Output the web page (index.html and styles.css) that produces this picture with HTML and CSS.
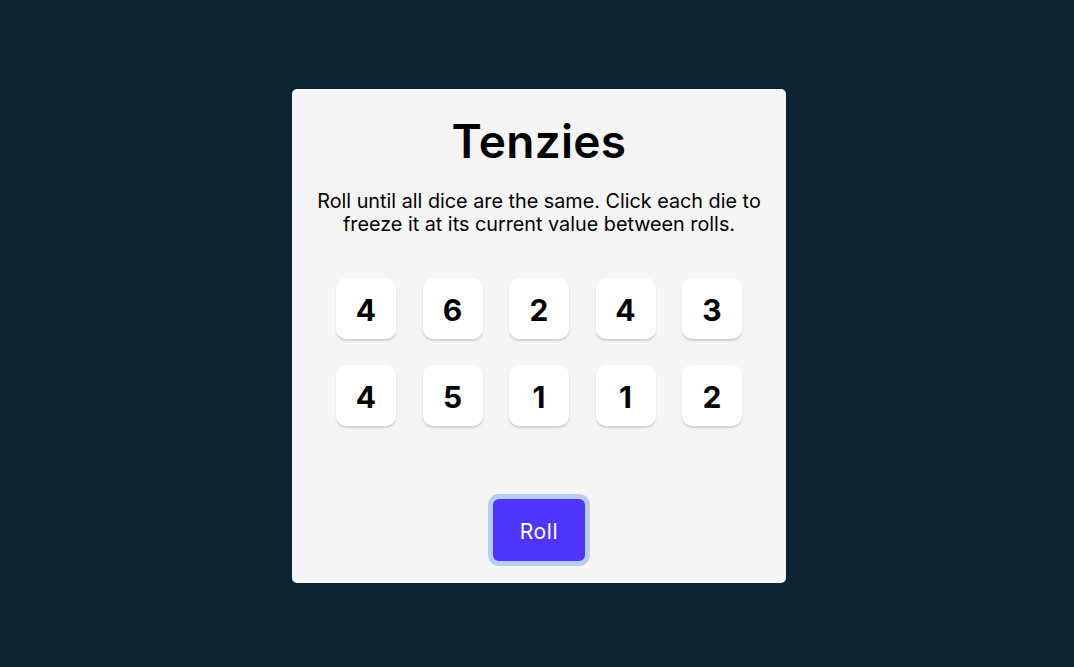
FILE: index.html
```html
<!DOCTYPE html>
<html lang="en">
<head>
<meta charset="utf-8">
<title>Tenzies</title>
<link rel="stylesheet" href="styles.css">
</head>
<body>
<main class="card">
  <h1 class="title">Tenzies</h1>
  <p class="instructions">Roll until all dice are the same. Click each die to freeze it at its current value between rolls.</p>
  <div class="dice">
    <button class="die">4</button>
    <button class="die">6</button>
    <button class="die">2</button>
    <button class="die">4</button>
    <button class="die">3</button>
    <button class="die">4</button>
    <button class="die">5</button>
    <button class="die">1</button>
    <button class="die">1</button>
    <button class="die">2</button>
  </div>
  <button class="roll">Roll</button>
</main>
</body>
</html>
```
FILE: styles.css
```css
* { box-sizing: border-box; }
html, body { margin: 0; }
body {
  background: #0B2434;
  min-height: 100vh;
  padding: 5px 0 0 4px;
  display: flex;
  justify-content: center;
  align-items: center;
  font-family: Inter, "Liberation Sans", sans-serif;
  color: #000;
}
.card {
  width: 494px;
  height: 494px;
  background: #F5F5F5;
  border-radius: 5px;
  display: flex;
  flex-direction: column;
  align-items: center;
  padding-top: 23px;
}
.title {
  margin: 0;
  font-size: 46px;
  font-weight: 600;
  line-height: 58px;
  letter-spacing: 0.3px;
}
.instructions {
  margin: 20px 0 0;
  font-size: 19.8px;
  line-height: 23px;
  text-align: center;
  width: 460px;
}
.dice {
  margin-top: 42px;
  display: grid;
  grid-template-columns: repeat(5, 60px);
  grid-auto-rows: 61px;
  column-gap: 26.5px;
  row-gap: 26px;
}
.die {
  border: none;
  background: #fff;
  border-radius: 10px;
  box-shadow: 0 2px 2px rgba(0, 0, 0, 0.15);
  font-family: Inter, "Liberation Sans", sans-serif;
  font-size: 30px;
  font-weight: 700;
  color: #000;
  padding: 3px 0 0;
}
.roll {
  margin-top: 73px;
  width: 92px;
  height: 62px;
  border: none;
  border-radius: 6px;
  background: #5035FF;
  color: #fff;
  font-family: Inter, "Liberation Sans", sans-serif;
  font-size: 21px;
  font-weight: 400;
  letter-spacing: 0.6px;
  padding: 2px 0 0;
  box-shadow: 0 0 0 5px #B5CEF8;
}
```
